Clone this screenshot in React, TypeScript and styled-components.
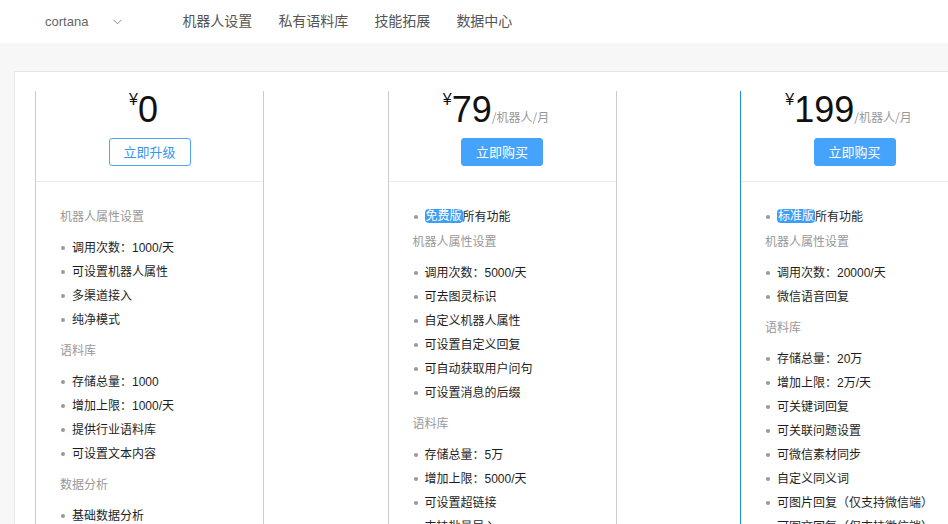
import React from "react";
import styled, { createGlobalStyle } from "styled-components";

const GlobalStyle = createGlobalStyle`
  html, body {
    margin: 0;
    padding: 0;
    height: 100%;
    overflow: hidden;
    background: #f7f7f7;
  }
  body {
    font-family: "Liberation Sans", "Noto Sans CJK SC", sans-serif;
    color: #333;
  }
  * { box-sizing: border-box; }
`;

const Page = styled.div`
  width: 948px;
  height: 524px;
  overflow: hidden;
  background: #f7f7f7;
`;

const Header = styled.header`
  height: 43px;
  background: #fff;
  display: flex;
  align-items: center;
  padding-left: 45px;
`;

const Brand = styled.div`
  display: flex;
  align-items: center;
  font-size: 13px;
  color: #666;
  line-height: 43px;
`;

const Chevron = styled.svg`
  margin-left: 25px;
  width: 9px;
  height: 6px;
`;

const Nav = styled.nav`
  display: flex;
  gap: 26px;
  margin-left: 60px;
`;

const NavItem = styled.a`
  font-size: 14px;
  color: #555;
  line-height: 43px;
  text-decoration: none;
`;

const Card = styled.section`
  margin: 28px 0 0 14px;
  width: 1100px;
  height: 600px;
  background: #fff;
  border: 1px solid #e6e6e6;
  padding: 19px 0 0 20px;
  display: flex;
  gap: 123.5px;
  align-items: flex-start;
`;

const Column = styled.div<{ $active?: boolean }>`
  width: 229px;
  flex-shrink: 0;
  height: 520px;
  border-left: 1px solid ${(p) => (p.$active ? "#1a8fe3" : "#cccccc")};
  border-right: 1px solid #cccccc;
`;

const PlanHead = styled.div`
  height: 91px;
  padding-top: 1px;
  border-bottom: 1px solid #ebebeb;
  display: flex;
  flex-direction: column;
  align-items: center;
`;

const Price = styled.div`
  height: 36px;
  line-height: 36px;
  padding-right: 12px;
  white-space: nowrap;
`;

const Yen = styled.span`
  font-size: 16px;
  line-height: 16px;
  vertical-align: top;
  color: #111;
`;

const Amount = styled.span`
  font-size: 36px;
  color: #111;
`;

const Unit = styled.span`
  font-size: 12px;
  color: #999;
  font-family: "Noto Sans CJK SC", sans-serif;
`;

const ActionButton = styled.button<{ $variant: "outline" | "solid" }>`
  margin-top: 10px;
  width: 82px;
  height: 28px;
  border-radius: 3px;
  font-family: "Noto Sans CJK SC", sans-serif;
  font-size: 13px;
  line-height: 26px;
  padding: 0;
  cursor: pointer;
  border: 1px solid ${(p) => (p.$variant === "outline" ? "#4fa6f6" : "#46a3fb")};
  background: ${(p) => (p.$variant === "outline" ? "#fff" : "#46a3fb")};
  color: ${(p) => (p.$variant === "outline" ? "#3797ee" : "#fff")};
`;

const PlanBody = styled.div`
  padding: 23px 0 0 24px;
`;

const dot = `
  position: relative;
  padding-left: 12px;
  &::before {
    content: "";
    position: absolute;
    left: 1px;
    top: 10px;
    width: 4px;
    height: 4px;
    border-radius: 50%;
    background: #999;
  }
`;

const Premium = styled.div`
  ${dot}
  font-size: 12px;
  line-height: 24px;
  color: #1e1e1e;
  margin-bottom: 1px;
`;

const Badge = styled.span`
  display: inline-block;
  background: #3f9ef2;
  color: #fff;
  border-radius: 4px;
  padding: 0 1px;
  line-height: 14px;
  vertical-align: 1px;
`;

const SectionTitle = styled.div`
  font-size: 12px;
  line-height: 24px;
  color: #999;
  margin-bottom: 7px;
`;

const FeatureList = styled.ul`
  list-style: none;
  margin: 0 0 7px;
  padding: 0;
`;

const Feature = styled.li`
  ${dot}
  font-size: 12px;
  line-height: 24px;
  color: #1e1e1e;
  white-space: nowrap;
`;

type Section = { title: string; items: string[] };
type Plan = {
  amount: string;
  unit?: boolean;
  button: string;
  variant: "outline" | "solid";
  active?: boolean;
  badge?: string;
  sections: Section[];
};

const plans: Plan[] = [
  {
    amount: "0",
    button: "立即升级",
    variant: "outline",
    sections: [
      {
        title: "机器人属性设置",
        items: ["调用次数：1000/天", "可设置机器人属性", "多渠道接入", "纯净模式"],
      },
      {
        title: "语料库",
        items: ["存储总量：1000", "增加上限：1000/天", "提供行业语料库", "可设置文本内容"],
      },
      { title: "数据分析", items: ["基础数据分析", "用户对话记录"] },
    ],
  },
  {
    amount: "79",
    unit: true,
    button: "立即购买",
    variant: "solid",
    badge: "免费版",
    sections: [
      {
        title: "机器人属性设置",
        items: [
          "调用次数：5000/天",
          "可去图灵标识",
          "自定义机器人属性",
          "可设置自定义回复",
          "可自动获取用户问句",
          "可设置消息的后缀",
        ],
      },
      {
        title: "语料库",
        items: ["存储总量：5万", "增加上限：5000/天", "可设置超链接", "支持批量导入"],
      },
    ],
  },
  {
    amount: "199",
    unit: true,
    button: "立即购买",
    variant: "solid",
    active: true,
    badge: "标准版",
    sections: [
      { title: "机器人属性设置", items: ["调用次数：20000/天", "微信语音回复"] },
      {
        title: "语料库",
        items: [
          "存储总量：20万",
          "增加上限：2万/天",
          "可关键词回复",
          "可关联问题设置",
          "可微信素材同步",
          "自定义同义词",
          "可图片回复（仅支持微信端）",
          "可图文回复（仅支持微信端）",
        ],
      },
    ],
  },
];

const navItems = ["机器人设置", "私有语料库", "技能拓展", "数据中心"];

export default function App() {
  return (
    <Page>
      <GlobalStyle />
      <Header>
        <Brand>
          cortana
          <Chevron viewBox="0 0 9 6">
            <path d="M0.5 0.8 L4.5 4.8 L8.5 0.8" fill="none" stroke="#888" strokeWidth="1" />
          </Chevron>
        </Brand>
        <Nav>
          {navItems.map((n) => (
            <NavItem key={n}>{n}</NavItem>
          ))}
        </Nav>
      </Header>
      <Card>
        {plans.map((p) => (
          <Column key={p.amount} $active={p.active}>
            <PlanHead>
              <Price>
                <Yen>¥</Yen>
                <Amount>{p.amount}</Amount>
                {p.unit && <Unit>/机器人/月</Unit>}
              </Price>
              <ActionButton $variant={p.variant}>{p.button}</ActionButton>
            </PlanHead>
            <PlanBody>
              {p.badge && (
                <Premium>
                  <Badge>{p.badge}</Badge>所有功能
                </Premium>
              )}
              {p.sections.map((s) => (
                <React.Fragment key={s.title}>
                  <SectionTitle>{s.title}</SectionTitle>
                  <FeatureList>
                    {s.items.map((i) => (
                      <Feature key={i}>{i}</Feature>
                    ))}
                  </FeatureList>
                </React.Fragment>
              ))}
            </PlanBody>
          </Column>
        ))}
      </Card>
    </Page>
  );
}
